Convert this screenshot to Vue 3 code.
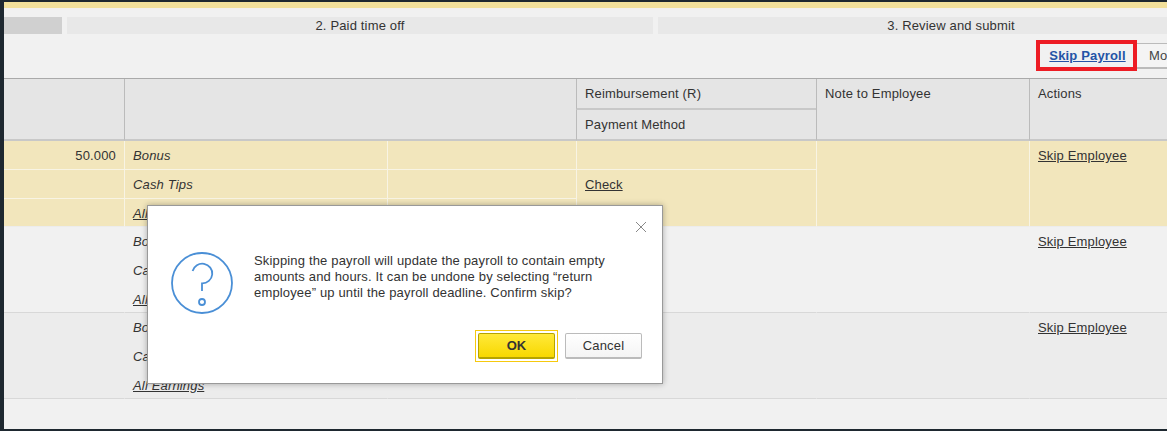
<template>
  <div class="page">
    <div class="topbar"></div>
    <div class="content">
      <div class="steps">
        <div class="step done"></div>
        <div class="step">2. Paid time off</div>
        <div class="step">3. Review and submit</div>
      </div>
      <div class="toolbar">
        <a class="skip">Skip Payroll</a>
        <button class="more">More</button>
      </div>
      <table class="grid">
        <colgroup>
          <col class="c1" /><col class="c2" /><col class="c3" /><col class="c4" /><col class="c5" /><col class="c6" />
        </colgroup>
        <thead>
          <tr>
            <th rowspan="2" class="first"></th>
            <th rowspan="2" colspan="2"></th>
            <th class="h1">Reimbursement (R)</th>
            <th rowspan="2">Note to Employee</th>
            <th rowspan="2">Actions</th>
          </tr>
          <tr><th class="h2">Payment Method</th></tr>
        </thead>
        <tbody v-for="(g, i) in groups" :key="i" :class="g.cls">
          <tr>
            <td class="num">{{ g.num }}</td>
            <td class="it">Bonus</td>
            <td></td>
            <td></td>
            <td rowspan="3"></td>
            <td rowspan="3"><a>Skip Employee</a></td>
          </tr>
          <tr>
            <td class="num"></td>
            <td class="it">Cash Tips</td>
            <td></td>
            <td rowspan="2"><a v-if="g.check">Check</a></td>
          </tr>
          <tr>
            <td class="num"></td>
            <td class="it"><a>All Earnings</a></td>
            <td></td>
          </tr>
        </tbody>
      </table>
    </div>

    <div class="dialog">
      <svg class="close" width="12" height="12" viewBox="0 0 12 12"><path d="M1 1L11 11M11 1L1 11" stroke="#888" stroke-width="1" fill="none" /></svg>
      <div class="body">
        <svg class="q" width="62" height="62" viewBox="0 0 62 62" fill="none" stroke="#4a8fd6" stroke-width="1.8">
          <circle cx="31" cy="31" r="30" />
          <path d="M21.6 19A10 9.8 0 1 1 31 31.3V39" />
          <circle cx="31" cy="50" r="3" />
        </svg>
        <p class="msg">Skipping the payroll will update the payroll to contain empty amounts and hours. It can be undone by selecting “return employee” up until the payroll deadline. Confirm skip?</p>
      </div>
      <div class="actions">
        <span class="ring"><button class="ok">OK</button></span>
        <button class="cancel">Cancel</button>
      </div>
    </div>
  </div>
</template>

<script setup>
const groups = [
  { num: '50.000', cls: 'hl', check: true },
  { num: '', cls: 'plain', check: false },
  { num: '', cls: 'shade', check: false }
]
</script>

<style>
html, body { margin: 0; overflow: hidden; background: #1e2830; }
</style>

<style scoped>
.page {
  position: relative;
  width: 1167px;
  height: 431px;
  overflow: hidden;
  display: flex;
  flex-direction: column;
  padding: 2px 0 2px 4px;
  box-sizing: border-box;
  font-family: "Liberation Sans", Arial, sans-serif;
  font-size: 13px;
  letter-spacing: 0.16px;
  color: #333;
}
.topbar { height: 6px; background: #f2e09b; flex: none; }
.content { flex: 1; background: #f1f1f1; overflow: hidden; }
.steps { display: flex; gap: 5px; margin-top: 9px; height: 17px; line-height: 17px; text-align: center; }
.step { background: #e8e8e8; width: 586px; flex: none; }
.done { width: 58px; background: #d0d0d0; }
.toolbar { display: flex; align-items: flex-start; margin-top: 6px; height: 38px; padding-left: 1032px; width: 300px; }
.skip {
  box-sizing: border-box;
  width: 101px;
  height: 31px;
  padding-left: 2px;
  border: 4px solid #ed1c24;
  text-align: center;
  line-height: 23px;
  color: #2453a6;
  font-weight: bold;
  text-decoration: underline;
  flex: none;
}
.more {
  flex: none;
  width: 60px;
  height: 26px;
  margin-top: 3px;
  box-sizing: border-box;
  border: 1px solid #bbb;
  border-left: 0;
  border-bottom-width: 2px;
  background: #f4f4f4;
  font: inherit;
  letter-spacing: inherit;
  color: #444;
  text-align: left;
  padding-left: 12px;
}
.grid {
  table-layout: fixed;
  border-collapse: separate;
  border-spacing: 0;
  width: 1239px;
  border-top: 1px solid #aaa;
}
.c1 { width: 120px; }
.c2 { width: 263px; }
.c3 { width: 189px; }
.c4 { width: 240px; }
.c5 { width: 213px; }
.c6 { width: 214px; }
th {
  background: #e5e5e5;
  font-weight: normal;
  text-align: left;
  vertical-align: top;
  padding: 7px 8px 5px;
  border-left: 1px solid #bbb;
  border-bottom: 2px solid #c8c8c8;
  line-height: 16px;
  box-sizing: border-box;
}
th.first { border-left: 0; }
th.h1 { height: 31px; }
th.h2 { height: 31px; padding-top: 7px; padding-bottom: 5px; }
td {
  height: 29px;
  box-sizing: border-box;
  padding: 7px 8px 4px;
  vertical-align: top;
  line-height: 16px;
  border-left: 1px solid transparent;
}
td.num { text-align: right; border-left: 0; }
tbody tr:last-child td { height: 28px; }
.plain td[rowspan], .plain tr:last-child td,
.shade td[rowspan], .shade tr:last-child td { border-bottom: 1px solid #d8d8d8; }
.plain td { background: #f1f1f1; }
.shade td { background: #ececec; }
.hl td { background: #f2e6bc; border-left-color: #f8f4e4; border-bottom: 1px solid #f8f4e4; }
.hl tr:last-child td, .hl td[rowspan] { border-bottom: 1px solid #ececec; }
td.it { font-style: italic; }
a { text-decoration: underline; }
.dialog {
  position: absolute;
  left: 147px;
  top: 205px;
  width: 516px;
  height: 179px;
  box-sizing: border-box;
  background: #fff;
  border: 1px solid #999;
  box-shadow: 0 0 6px rgba(0, 0, 0, 0.3);
}
.close { position: absolute; left: 487px; top: 15px; }
.body { display: flex; align-items: flex-start; padding: 46px 0 0 23px; gap: 21px; }
.q { flex: none; }
.msg { margin: 0; width: 370px; line-height: 16px; padding-top: 1px; }
.actions { position: absolute; right: 20px; top: 124px; display: flex; gap: 7px; align-items: center; }
button { font-family: inherit; }
.ring { display: block; border: 1px solid #f6c90e; padding: 2px; }
.ok {
  display: block;
  box-sizing: border-box;
  width: 77px;
  height: 26px;
  padding: 0;
  font-size: 13px;
  font-weight: bold;
  border: 1px solid #b5a300;
  border-bottom-width: 2px;
  border-radius: 2px;
  background: linear-gradient(#ffe93a, #f8d800);
  color: #333;
}
.cancel {
  box-sizing: border-box;
  width: 77px;
  height: 26px;
  padding: 0;
  font-size: 13px;
  letter-spacing: inherit;
  border: 1px solid #bbb;
  border-bottom-width: 2px;
  border-radius: 2px;
  background: linear-gradient(#fff, #f4f4f4);
  color: #333;
}
</style>
